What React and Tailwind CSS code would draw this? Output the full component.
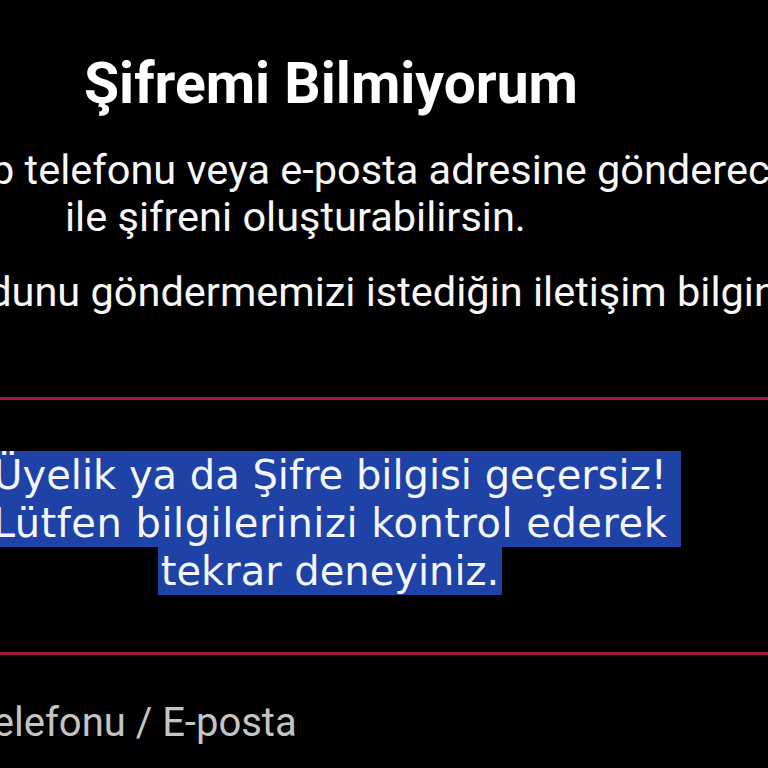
import React from "react";

export default function App() {
  return (
    <div className="w-[768px] h-[768px] bg-black overflow-hidden text-white font-['Roboto',sans-serif]">
      <h1 className="w-[662px] pt-[50px] text-center text-[57px] leading-[67px] font-bold whitespace-nowrap">
        Şifremi Bilmiyorum
      </h1>
      <p className="mt-[29px] text-[41.5px] leading-[47px] whitespace-nowrap text-[#f7f7f7]">
        <span className="block -ml-[58px]">Cep telefonu veya e-posta adresine göndereceğimiz kod</span>
        <span className="block ml-[65px]">ile şifreni oluşturabilirsin.</span>
      </p>
      <p className="mt-[28px] -ml-[61px] text-[41.5px] leading-[47px] whitespace-nowrap text-[#f7f7f7]">
        Kodunu göndermemizi istediğin iletişim bilgini seç.
      </p>
      <div className="mt-[82px] w-[900px] -ml-[66px] border-y-[3px] border-[#a3183f] pt-[51px] pb-[57px]">
        <div className="w-[792px] text-center text-[40px] leading-[48px] whitespace-nowrap text-[#f4f6ff] font-['DejaVu_Sans',sans-serif]">
          <div>
            <span className="ml-[12px] pl-[2px] pr-[14px] py-[1px] bg-[#1e42a6]">Üyelik ya da Şifre bilgisi geçersiz!</span>
          </div>
          <div>
            <span className="ml-[12px] pl-[2px] pr-[14px] py-[1px] bg-[#1e42a6] tracking-[0.5px]">Lütfen bilgilerinizi kontrol ederek</span>
          </div>
          <div>
            <span className="px-[3px] py-[1px] bg-[#1e42a6]">tekrar deneyiniz.</span>
          </div>
        </div>
      </div>
      <label className="block mt-[44px] -ml-[108px] text-[40px] leading-[48px] whitespace-nowrap text-[#c4c4c4]">
        Cep Telefonu / E-posta
      </label>
    </div>
  );
}
